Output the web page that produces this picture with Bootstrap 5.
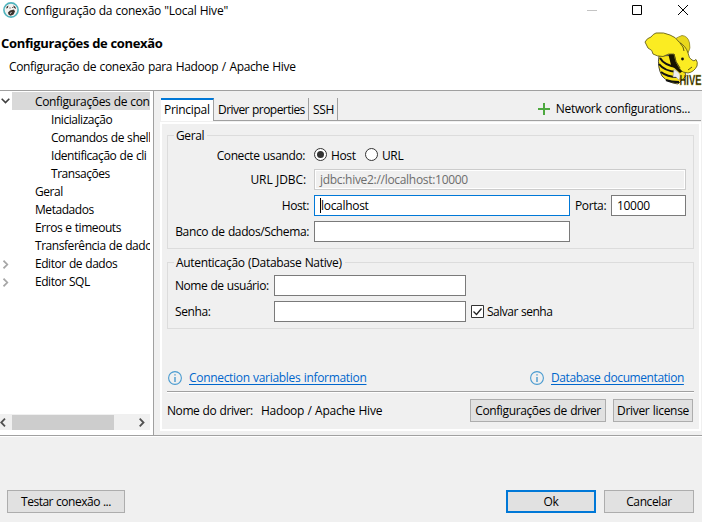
<!DOCTYPE html>
<html lang="pt-BR">
<head>
<meta charset="utf-8">
<meta name="viewport" content="width=device-width, initial-scale=1">
<title>Configuração da conexão "Local Hive"</title>
<link href="https://cdn.jsdelivr.net/npm/bootstrap@5.3.0/dist/css/bootstrap.min.css" rel="stylesheet">
<style>
body{width:702px;height:522px;overflow:hidden;background:#f0f0f0;color:#000;font:12px/18px "Open Sans","Noto Sans",sans-serif;letter-spacing:-.38px;word-spacing:.5px;white-space:nowrap}
svg{display:block;flex:none}
.dialog-head{height:90px}
.titlebar{height:20px;padding-left:3px}
.t-title{letter-spacing:-.22px;word-spacing:.2px;padding:1px 0 0 5px}
.dialog-head h1{font-size:13px;line-height:18px;letter-spacing:-.33px;word-spacing:0;margin:14px 0 0 1px}
.dialog-head p{margin:6px 0 0 9px;letter-spacing:-.35px;word-spacing:.8px}
.hive{position:absolute;left:644px;top:31px}
.main{height:346px;border-top:1px solid #a0a0a0;border-bottom:1px solid #a0a0a0}
.side{width:154px;border-right:1px solid #a0a0a0}
.tree{height:323px;padding-top:1px;width:150px}
.node{height:18px}
.node .twist{width:12px;padding-left:1px}
.node .twist.shut{padding:2px 0 0 3px}
.node .lbl{flex:1;padding:1px 0 0 23px;line-height:17px;overflow:hidden;letter-spacing:-.45px}
.node.kid .lbl{padding-left:39px}
.node.sel .lbl{background:#d9d9d9;letter-spacing:-.36px}
.hscroll{height:16px;width:150px;background:#f0f0f0}
.thumb{width:102px;height:15px;background:#cdcdcd}
.pane{margin:7px 1px 5px 6px;width:541px}
.tabs{height:24px}
.tab1{width:53px;border-top:2px solid #0078d7;border-right:1px solid #a0a0a0;background:#fff;padding-left:3px;height:23px;margin-left:1px;line-height:20px;letter-spacing:-.3px}
.tab{border-right:1px solid #a0a0a0;height:22px;padding-left:4px;line-height:23px}
.tab.wide{letter-spacing:-.55px}
.tabs .rest{border-bottom:1px solid #a0a0a0;height:23px}
.netc{padding-right:11px;gap:6px;letter-spacing:-.28px}
.pagebox{border:2px solid #fff;height:309px;padding:0 5px}
.grp{border:1px solid #dcdcdc;position:relative;width:527px}
.grp>.cap{position:absolute;left:6px;top:-9px;background:#f0f0f0;padding:0 3px 0 2px}
.fld{border:1px solid #7a7a7a;background:#fff;height:21px;line-height:19px;padding-left:5px;letter-spacing:-.3px}
.fld.off{border-color:#ccc;color:#6d6d6d;background:#f0f0f0;box-shadow:inset 0 0 0 1px #fff}
.fld.act{border-color:#0078d7}
.row-f{height:21px;margin-bottom:5px}
.lab{width:146px;text-align:right;padding-right:5px}
.lab.far{padding-right:9px}
.lk{color:#0066cc;text-decoration:underline;text-underline-offset:2px;margin-left:7px;letter-spacing:-.31px}
.wbtn{background:#e1e1e1;border:1px solid #adadad;height:23px;line-height:21px;text-align:center}
.wbtn.def{border:2px solid #0078d7;line-height:19px}
.caret-i{width:1px;height:15px;background:#000}
</style>
</head>
<body>
<header class="dialog-head bg-white">
  <div class="titlebar d-flex align-items-center">
    <svg width="16" height="16" viewBox="0 0 16 16"><circle cx="8" cy="8" r="7.100" fill="#f4f2f0" stroke="#4fb3bd" stroke-width="1.600"/><path d="M3 6.500Q3.500 4 5.500 3.500L4.800 6zM10 3.500Q12.800 4 13 7L11.300 6z" fill="#3b302c"/><path d="M5 10.500L7 8.500 11 7.500 12 9.500 10.500 12.500 7.500 13.800 5.500 12.500z" fill="#3b302c"/><path d="M6.500 6h1M9.300 5.500h1" stroke="#3b302c"/><path d="M7 11.500l1.500-1" stroke="#eee"/></svg>
    <span class="t-title">Configuração da conexão "Local Hive"</span>
    <svg class="ms-auto" width="115" height="20" viewBox="0 0 115 20" fill="none"><path d="M0 10.500h10" stroke="#c4c4c4"/><path d="M45.500 5.500h9v9h-9z" stroke="#000"/><path d="M91 5l10 10M101 5l-10 10" stroke="#000"/></svg>
  </div>
  <h1 class="fw-bold">Configurações de conexão</h1>
  <p>Configuração de conexão para Hadoop / Apache Hive</p>
  <svg class="hive" width="58" height="56" viewBox="0 0 58 56">
    <path d="M15 25Q13 36 18 45 24 52 34 53L42 45 36 24z" fill="#f7e316" stroke="#222" stroke-width=".8"/>
    <path d="M15 33Q20 40 33 41M17 41Q23 46 34 46M22 49Q27 51 35 51M16 27Q20 34 32 36" fill="none" stroke="#111" stroke-width="2"/>
    <path d="M24 22l10 2 8 14-6 4-9-8z" fill="#151300"/>
    <path d="M31 8Q34 6 38 4.500 44 5 45.500 12 47 17 44 22L36 20z" fill="#e9d81c" stroke="#8c8320" stroke-width=".8"/>
    <path d="M12 2Q20 1 26 4 32 6 35 11 42 15 44 22 45 28 48 29 50 31 52 28.500 54 31 53 35 50 41 44 42 38 42 36 38 31 31 30 23 24 22 19 25.500 13 25.500 9 23 9 19 4 17L1 11Q3 7 7 6 9 3 12 2z" fill="#fbec22" stroke="#65601b" stroke-width=".9"/>
    <path d="M30 23q1 8 6 14M36 12q4 4 4 8M44 39l4-3" fill="none" stroke="#5b5413" stroke-width="1"/>
    <circle cx="38.500" cy="28" r="1.400" fill="#111"/>
    <path d="M30 38l4 3 3 4-2 4-3-3-3 0z" fill="#eee" stroke="#999" stroke-width=".5"/>
    <text x="35.500" y="53.500" font-family="Liberation Sans" font-weight="bold" font-size="15" textLength="22" letter-spacing="0" lengthAdjust="spacingAndGlyphs" fill="#1c1a00" stroke="#c9bd20" stroke-width=".3">HIVE</text>
  </svg>
</header>
<main class="main d-flex">
  <nav class="side bg-white">
    <div class="tree">
      <div class="node sel d-flex"><span class="twist d-flex align-items-center"><svg width="9" height="6" viewBox="0 0 9 6"><path d="M.7.800l3.800 3.800L8.300.800" fill="none" stroke="#404040" stroke-width="1.600"/></svg></span><span class="lbl">Configurações de conexão</span></div>
      <div class="node kid d-flex"><span class="twist"></span><span class="lbl">Inicialização</span></div>
      <div class="node kid d-flex"><span class="twist"></span><span class="lbl">Comandos de shell</span></div>
      <div class="node kid d-flex"><span class="twist"></span><span class="lbl">Identificação de cli</span></div>
      <div class="node kid d-flex"><span class="twist"></span><span class="lbl">Transações</span></div>
      <div class="node d-flex"><span class="twist"></span><span class="lbl">Geral</span></div>
      <div class="node d-flex"><span class="twist"></span><span class="lbl">Metadados</span></div>
      <div class="node d-flex"><span class="twist"></span><span class="lbl">Erros e timeouts</span></div>
      <div class="node d-flex"><span class="twist"></span><span class="lbl">Transferência de dados</span></div>
      <div class="node d-flex"><span class="twist shut d-flex align-items-center"><svg width="6" height="9" viewBox="0 0 6 9"><path d="M.5.700L4.300 4.500.5 8.300" fill="none" stroke="#a6a6a6" stroke-width="1.700"/></svg></span><span class="lbl">Editor de dados</span></div>
      <div class="node d-flex"><span class="twist shut d-flex align-items-center"><svg width="6" height="9" viewBox="0 0 6 9"><path d="M.5.700L4.300 4.500.5 8.300" fill="none" stroke="#a6a6a6" stroke-width="1.700"/></svg></span><span class="lbl">Editor SQL</span></div>
    </div>
    <div class="hscroll d-flex align-items-center">
      <svg width="12" height="9" viewBox="0 0 12 9"><path d="M5 .7L1.200 4.500 5 8.300" fill="none" stroke="#505050" stroke-width="1.800"/></svg>
      <div class="thumb"></div>
      <svg class="ms-auto me-1" width="7" height="9" viewBox="0 0 7 9"><path d="M.7.700L4.500 4.500.7 8.300" fill="none" stroke="#505050" stroke-width="1.800"/></svg>
    </div>
  </nav>
  <section class="pane">
    <div class="tabs d-flex">
      <div class="tab1">Principal</div>
      <div class="rest d-flex flex-fill">
        <div class="tab wide" style="width:95px">Driver properties</div>
        <div class="tab" style="width:29px">SSH</div>
        <div class="d-flex align-items-center ms-auto netc">
          <svg width="12" height="12" viewBox="0 0 12 12"><path d="M6 0v12M0 6h12" stroke="#4da83f" stroke-width="2"/></svg><span>Network configurations...</span>
        </div>
      </div>
    </div>
    <div class="pagebox">
      <div class="grp" style="height:114px;margin-top:11px;padding-top:7px">
        <span class="cap">Geral</span>
        <div class="row-f d-flex align-items-center" style="padding-top:4px">
          <div class="lab far">Conecte usando:</div>
          <svg style="margin-top:-2px" width="13" height="13" viewBox="0 0 13 13"><circle cx="6.500" cy="6.500" r="6" fill="#fff" stroke="#333"/><circle cx="6.500" cy="6.500" r="3.500" fill="#333"/></svg><span style="width:38px;padding-left:4px">Host</span>
          <svg style="margin-top:-2px" width="13" height="13" viewBox="0 0 13 13"><circle cx="6.500" cy="6.500" r="6" fill="#fff" stroke="#333"/></svg><span style="padding-left:4px">URL</span>
        </div>
        <div class="row-f d-flex align-items-center"><div class="lab" style="padding-right:8px;margin-top:1px;letter-spacing:-.1px">URL JDBC:</div><div class="fld off" style="width:372px">jdbc:hive2://localhost:10000</div></div>
        <div class="row-f d-flex align-items-center"><div class="lab">Host:</div><div class="fld act d-flex align-items-center" style="width:256px"><span class="caret-i"></span>localhost</div><span style="width:41px;padding-left:5px">Porta:</span><div class="fld" style="width:75px">10000</div></div>
        <div class="row-f d-flex align-items-center"><div class="lab">Banco de dados/Schema:</div><div class="fld" style="width:256px"></div></div>
      </div>
      <div class="grp" style="height:67px;margin-top:13px;padding:12px 0 0 7px">
        <span class="cap" style="letter-spacing:-.33px">Autenticação (Database Native)</span>
        <div class="row-f d-flex align-items-center"><span style="width:99px;letter-spacing:-.45px">Nome de usuário:</span><div class="fld" style="width:192px"></div></div>
        <div class="row-f d-flex align-items-center"><span style="width:99px">Senha:</span><div class="fld" style="width:192px"></div>
        <svg style="margin-left:5px" width="13" height="13" viewBox="0 0 13 13"><path d="M.5.500h12v12H.5z" fill="#fff" stroke="#333"/><path d="M2.500 6.500l3 3 5-6" fill="none" stroke="#222" stroke-width="1.300"/></svg><span style="padding-left:3px;letter-spacing:-.5px">Salvar senha</span></div>
      </div>
      <div class="d-flex align-items-center" style="margin-top:40px;height:18px;padding:0 8px 0 1px">
        <svg width="14" height="14" viewBox="0 0 14 14"><circle cx="7" cy="7" r="6.400" fill="none" stroke="#4a9bd0" stroke-width="1.100"/><path d="M7 3.300v1.300M7 6v5" stroke="#3c93cc" stroke-width="1.300"/></svg><a class="lk">Connection variables information</a>
        <svg class="ms-auto" width="14" height="14" viewBox="0 0 14 14"><circle cx="7" cy="7" r="6.400" fill="none" stroke="#4a9bd0" stroke-width="1.100"/><path d="M7 3.300v1.300M7 6v5" stroke="#3c93cc" stroke-width="1.300"/></svg><a class="lk" style="width:135px;letter-spacing:-.42px">Database documentation</a>
      </div>
      <div style="margin-top:4px;border-top:1px solid #a0a0a0;border-bottom:1px solid #fff"></div>
      <div class="d-flex align-items-center" style="margin-top:6px">
        <span style="width:94px;letter-spacing:-.42px">Nome do driver:</span><span style="letter-spacing:-.24px">Hadoop / Apache Hive</span>
        <div class="wbtn ms-auto" style="width:136px">Configurações de driver</div>
        <div class="wbtn" style="width:80px;margin:0 1px 0 7px;letter-spacing:-.3px">Driver license</div>
      </div>
    </div>
  </section>
</main>
<footer class="d-flex border-top border-white" style="padding:53px 8px 0 7px">
  <div class="wbtn" style="width:118px;letter-spacing:-.5px">Testar conexão ...</div>
  <div class="wbtn def ms-auto" style="width:90px">Ok</div>
  <div class="wbtn" style="width:90px;margin-left:8px">Cancelar</div>
</footer>
<script src="https://cdn.jsdelivr.net/npm/bootstrap@5.3.0/dist/js/bootstrap.bundle.min.js"></script>
</body>
</html>
